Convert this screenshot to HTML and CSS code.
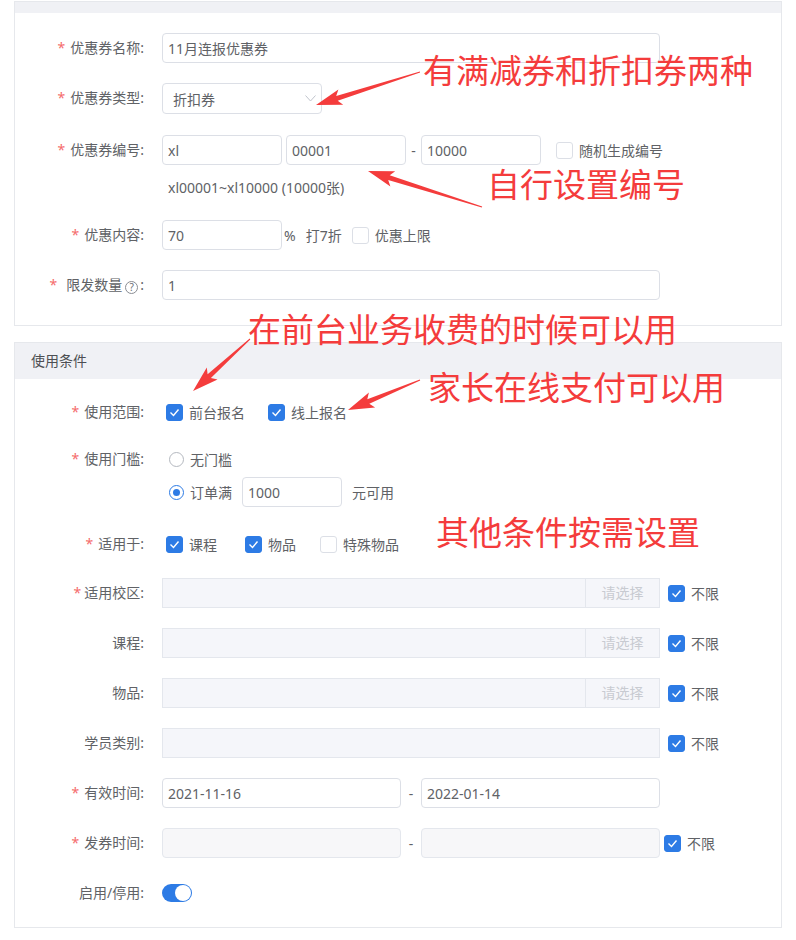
FILE: index.html
```html
<!DOCTYPE html>
<html lang="zh-CN">
<head>
    <meta charset="UTF-8">
    <meta name="viewport" content="width=device-width, initial-scale=1.0">
    <title>优惠券设置</title>
    <link rel="stylesheet" href="styles.css">
</head>
<body>
    <div class="page">
        <!-- 基本信息 -->
        <div class="panel panel_base">
            <div class="panel_head"></div>
            <div class="panel_body">
                <div class="row">
                    <div class="label"><i>*</i>优惠券名称:</div>
                    <div class="ctrl"><input class="ipt ipt_long" value="11月连报优惠券"></div>
                </div>
                <div class="row mt20">
                    <div class="label"><i>*</i>优惠券类型:</div>
                    <div class="ctrl">
                        <div class="select">
                            <span>折扣券</span>
                            <svg width="11" height="7" viewBox="0 0 11 7"><polyline points="0.5,0.5 5.5,6 10.5,0.5" fill="none" stroke="#c0c4cc" stroke-width="1"/></svg>
                        </div>
                    </div>
                </div>
                <div class="row mt21">
                    <div class="label"><i>*</i>优惠券编号:</div>
                    <div class="ctrl ctrl_col">
                        <div class="line">
                            <input class="ipt ipt_s" value="xl">
                            <input class="ipt ipt_s ml4" value="00001">
                            <span class="dash dash_s">-</span>
                            <input class="ipt ipt_s" value="10000">
                            <label class="check ml15"><span class="box"></span>随机生成编号</label>
                        </div>
                        <div class="hint">xl00001~xl10000 (10000张)</div>
                    </div>
                </div>
                <div class="row mt22">
                    <div class="label"><i>*</i>优惠内容:</div>
                    <div class="ctrl">
                        <input class="ipt ipt_s" value="70">
                        <span class="unit">%</span>
                        <span class="discount">打7折</span>
                        <label class="check ml10"><span class="box"></span>优惠上限</label>
                    </div>
                </div>
                <div class="row mt20">
                    <div class="label"><i class="req_wide">*</i>限发数量<span class="help">?</span>:</div>
                    <div class="ctrl"><input class="ipt ipt_long" value="1"></div>
                </div>
            </div>
        </div>

        <!-- 使用条件 -->
        <div class="panel panel_cond">
            <div class="panel_head">使用条件</div>
            <div class="panel_body">
                <div class="row">
                    <div class="label"><i>*</i>使用范围:</div>
                    <div class="ctrl pl4">
                        <label class="check"><span class="box on"><svg width="15" height="15" viewBox="0 0 15 15"><polyline points="3.5,7.5 6.5,10.5 11.5,4.5" fill="none" stroke="#fff" stroke-width="1.4"/></svg></span>前台报名</label>
                        <label class="check ml23"><span class="box on"><svg width="15" height="15" viewBox="0 0 15 15"><polyline points="3.5,7.5 6.5,10.5 11.5,4.5" fill="none" stroke="#fff" stroke-width="1.4"/></svg></span>线上报名</label>
                    </div>
                </div>
                <div class="row mt17">
                    <div class="label"><i>*</i>使用门槛:</div>
                    <div class="ctrl ctrl_col pl7">
                        <div class="line"><label class="radio"><span class="dot"></span>无门槛</label></div>
                        <div class="line mt3">
                            <label class="radio"><span class="dot on"></span>订单满</label>
                            <input class="ipt ipt_m ml10" value="1000">
                            <span class="ml10">元可用</span>
                        </div>
                    </div>
                </div>
                <div class="row mt22">
                    <div class="label"><i>*</i>适用于:</div>
                    <div class="ctrl pl4">
                        <label class="check"><span class="box on"><svg width="15" height="15" viewBox="0 0 15 15"><polyline points="3.5,7.5 6.5,10.5 11.5,4.5" fill="none" stroke="#fff" stroke-width="1.4"/></svg></span>课程</label>
                        <label class="check ml28"><span class="box on"><svg width="15" height="15" viewBox="0 0 15 15"><polyline points="3.5,7.5 6.5,10.5 11.5,4.5" fill="none" stroke="#fff" stroke-width="1.4"/></svg></span>物品</label>
                        <label class="check ml24"><span class="box"></span>特殊物品</label>
                    </div>
                </div>
                <div class="row mt19">
                    <div class="label"><i class="req_tight">*</i>适用校区:</div>
                    <div class="ctrl">
                        <div class="picker"><span class="picker_btn">请选择</span></div>
                        <label class="check ml8"><span class="box on"><svg width="15" height="15" viewBox="0 0 15 15"><polyline points="3.5,7.5 6.5,10.5 11.5,4.5" fill="none" stroke="#fff" stroke-width="1.4"/></svg></span>不限</label>
                    </div>
                </div>
                <div class="row mt20">
                    <div class="label">课程:</div>
                    <div class="ctrl">
                        <div class="picker"><span class="picker_btn">请选择</span></div>
                        <label class="check ml8"><span class="box on"><svg width="15" height="15" viewBox="0 0 15 15"><polyline points="3.5,7.5 6.5,10.5 11.5,4.5" fill="none" stroke="#fff" stroke-width="1.4"/></svg></span>不限</label>
                    </div>
                </div>
                <div class="row mt20">
                    <div class="label">物品:</div>
                    <div class="ctrl">
                        <div class="picker"><span class="picker_btn">请选择</span></div>
                        <label class="check ml8"><span class="box on"><svg width="15" height="15" viewBox="0 0 15 15"><polyline points="3.5,7.5 6.5,10.5 11.5,4.5" fill="none" stroke="#fff" stroke-width="1.4"/></svg></span>不限</label>
                    </div>
                </div>
                <div class="row mt20">
                    <div class="label">学员类别:</div>
                    <div class="ctrl">
                        <div class="picker"></div>
                        <label class="check ml8"><span class="box on"><svg width="15" height="15" viewBox="0 0 15 15"><polyline points="3.5,7.5 6.5,10.5 11.5,4.5" fill="none" stroke="#fff" stroke-width="1.4"/></svg></span>不限</label>
                    </div>
                </div>
                <div class="row mt20">
                    <div class="label"><i>*</i>有效时间:</div>
                    <div class="ctrl">
                        <input class="ipt ipt_date" value="2021-11-16">
                        <span class="dash dash_l">-</span>
                        <input class="ipt ipt_date" value="2022-01-14">
                    </div>
                </div>
                <div class="row mt20">
                    <div class="label"><i>*</i>发券时间:</div>
                    <div class="ctrl">
                        <input class="ipt ipt_date ipt_dis" value="" disabled>
                        <span class="dash dash_l">-</span>
                        <input class="ipt ipt_date ipt_dis" value="" disabled>
                        <label class="check ml4"><span class="box on"><svg width="15" height="15" viewBox="0 0 15 15"><polyline points="3.5,7.5 6.5,10.5 11.5,4.5" fill="none" stroke="#fff" stroke-width="1.4"/></svg></span>不限</label>
                    </div>
                </div>
                <div class="row mt20">
                    <div class="label">启用/停用:</div>
                    <div class="ctrl">
                        <span class="switch"><span class="knob"></span></span>
                    </div>
                </div>
            </div>
        </div>

        <!-- 标注 -->
        <svg class="arrows" width="796" height="940" viewBox="0 0 796 940">
            <polygon points="419.9,71.5 336.2,96 338.4,89.5 316,105 343.2,104.8 337.7,100.7 420.1,72.5"/>
            <polygon points="482.2,206.5 389.7,175.2 395.2,171.2 368,171 390.4,186.5 388.2,180 481.8,207.5"/>
            <polygon points="249.7,338.6 207.6,374.3 206.8,367.6 193,391 217.6,379.4 210.9,378 250.3,339.4"/>
            <polygon points="419.8,379.5 367.3,399.2 368.9,392.6 348,410 375.1,407.4 369.3,403.8 420.2,380.5"/>
        </svg>
        <div class="note note_type">有满减券和折扣券两种</div>
        <div class="note note_code">自行设置编号</div>
        <div class="note note_front">在前台业务收费的时候可以用</div>
        <div class="note note_online">家长在线支付可以用</div>
        <div class="note note_other">其他条件按需设置</div>
    </div>
</body>
</html>
```

FILE: styles.css
```css
*{
    box-sizing: border-box;
}
body{
    margin: 0;
    background: #fff;
    font-family: "Noto Sans", "Noto Sans CJK SC", sans-serif;
    font-size: 14px;
    color: #606266;
}
.page{
    position: relative;
    width: 796px;
    height: 940px;
    padding: 1px 0 0 14px;
    overflow: hidden;
}
.panel{
    width: 768px;
    border: 1px solid #e6e8ec;
}
.panel_head{
    background: #f0f1f5;
}
.panel_base .panel_head{
    height: 11px;
}
.panel_base .panel_body{
    padding: 20px 0 25px;
}
.panel_cond{
    margin-top: 16px;
}
.panel_cond .panel_head{
    height: 36px;
    line-height: 36px;
    padding-left: 16px;
    color: #4d4f53;
}
.panel_cond .panel_body{
    padding: 18px 0 19px;
}

/* 表单行 */
.row{
    display: flex;
    align-items: flex-start;
}
.label{
    flex: none;
    width: 147px;
    padding-right: 18px;
    text-align: right;
    line-height: 30px;
    white-space: nowrap;
}
.label i{
    font-style: normal;
    color: #f56c6c;
    margin-right: 5px;
}
.label i.req_wide{
    margin-right: 9px;
}
.label i.req_tight{
    margin-right: 3px;
}
.help{
    display: inline-flex;
    align-items: center;
    justify-content: center;
    width: 13px;
    height: 13px;
    margin: 0 2px 0 3px;
    border: 1px solid #8a8d93;
    border-radius: 50%;
    font-size: 10px;
    line-height: 1;
    color: #6b6e74;
    vertical-align: -1px;
}
.ctrl{
    display: flex;
    align-items: center;
    min-height: 30px;
}
.ctrl_col{
    flex-direction: column;
    align-items: flex-start;
}
.line{
    display: flex;
    align-items: center;
    min-height: 30px;
}
.hint{
    margin-top: 13px;
    padding-left: 6px;
    line-height: 20px;
}

/* 输入框 */
.ipt{
    height: 30px;
    padding: 0 5px;
    border: 1px solid #dcdfe6;
    border-radius: 4px;
    background: #fff;
    font: inherit;
    color: #606266;
    outline: none;
}
.ipt_long{
    width: 498px;
}
.ipt_s{
    width: 120px;
}
.ipt_m{
    width: 100px;
}
.ipt_date{
    width: 239px;
}
.ipt_dis{
    background: #f7f7f9;
    border-color: #e4e7ed;
}
.select{
    display: flex;
    align-items: center;
    justify-content: space-between;
    width: 160px;
    height: 31px;
    padding: 0 5px 0 10px;
    border: 1px solid #dcdfe6;
    border-radius: 4px;
}
.picker{
    display: flex;
    justify-content: flex-end;
    width: 498px;
    height: 30px;
    border: 1px solid #e4e7ed;
    background: #f5f6fa;
}
.picker_btn{
    width: 74px;
    border-left: 1px solid #e4e7ed;
    text-align: center;
    line-height: 28px;
    color: #c8cbd1;
}
.dash{
    text-align: center;
}
.dash_s{
    width: 15px;
}
.dash_l{
    width: 20px;
}
.unit{
    margin-left: 2px;
}
.discount{
    margin-left: 10px;
}

/* 复选框 单选框 开关 */
.check,
.radio{
    display: inline-flex;
    align-items: center;
    gap: 6px;
}
.box{
    display: flex;
    align-items: center;
    justify-content: center;
    width: 17px;
    height: 17px;
    border: 1px solid #dcdfe6;
    border-radius: 3px;
    background: #fff;
}
.box.on{
    background: #2d7be5;
    border-color: #2d7be5;
}
.dot{
    display: flex;
    align-items: center;
    justify-content: center;
    width: 15px;
    height: 15px;
    border: 1px solid #b4b8bf;
    border-radius: 50%;
}
.dot.on{
    border-color: #2d7be5;
}
.dot.on::after{
    content: "";
    width: 7px;
    height: 7px;
    border-radius: 50%;
    background: #2d7be5;
}
.switch{
    display: flex;
    justify-content: flex-end;
    width: 30px;
    height: 18px;
    padding: 1px;
    border-radius: 9px;
    background: #2d7be5;
}
.knob{
    width: 16px;
    height: 16px;
    border-radius: 50%;
    background: #fff;
}

/* 间距 */
.mt3{margin-top: 3px;}
.mt17{margin-top: 17px;}
.mt19{margin-top: 19px;}
.mt20{margin-top: 20px;}
.mt21{margin-top: 21px;}
.mt22{margin-top: 22px;}
.ml4{margin-left: 4px;}
.ml8{margin-left: 8px;}
.ml10{margin-left: 10px;}
.ml15{margin-left: 15px;}
.ml23{margin-left: 23px;}
.ml24{margin-left: 24px;}
.ml28{margin-left: 28px;}
.pl4{padding-left: 4px;}
.pl7{padding-left: 7px;}

/* 红色标注 */
.arrows{
    position: absolute;
    left: 0;
    top: 0;
    fill: #f43c3c;
    pointer-events: none;
}
.note{
    position: absolute;
    font-family: "Noto Sans CJK SC", sans-serif;
    font-size: 33px;
    line-height: 33px;
    color: #f43c3c;
    white-space: nowrap;
}
.note_type{left: 423px; top: 53px;}
.note_code{left: 487px; top: 167px;}
.note_front{left: 248px; top: 312px;}
.note_online{left: 428px; top: 370px;}
.note_other{left: 436px; top: 515px;}
```
